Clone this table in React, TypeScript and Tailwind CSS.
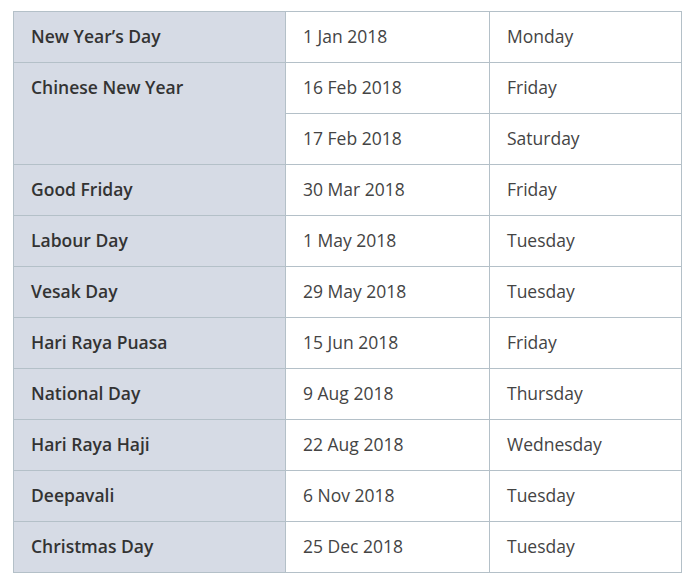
import React from 'react';

interface Holiday {
  name: string;
  dates: { date: string; day: string }[];
}

const HOLIDAYS: Holiday[] = [
  { name: 'New Year’s Day', dates: [{ date: '1 Jan 2018', day: 'Monday' }] },
  {
    name: 'Chinese New Year',
    dates: [
      { date: '16 Feb 2018', day: 'Friday' },
      { date: '17 Feb 2018', day: 'Saturday' },
    ],
  },
  { name: 'Good Friday', dates: [{ date: '30 Mar 2018', day: 'Friday' }] },
  { name: 'Labour Day', dates: [{ date: '1 May 2018', day: 'Tuesday' }] },
  { name: 'Vesak Day', dates: [{ date: '29 May 2018', day: 'Tuesday' }] },
  { name: 'Hari Raya Puasa', dates: [{ date: '15 Jun 2018', day: 'Friday' }] },
  { name: 'National Day', dates: [{ date: '9 Aug 2018', day: 'Thursday' }] },
  { name: 'Hari Raya Haji', dates: [{ date: '22 Aug 2018', day: 'Wednesday' }] },
  { name: 'Deepavali', dates: [{ date: '6 Nov 2018', day: 'Tuesday' }] },
  { name: 'Christmas Day', dates: [{ date: '25 Dec 2018', day: 'Tuesday' }] },
];

const cell = 'h-[51px] border-r border-b border-[#b4c0c8] pl-[17px] pt-[11px] leading-[27px]';

export default function App() {
  return (
    <div className="min-h-[582px] w-[694px] bg-white pt-[11px] pl-[13px] font-['Open_Sans',sans-serif] text-[17.5px]">
      <div className="grid w-[669px] grid-cols-[272px_204px_192px] border-l border-t border-[#b4c0c8]">
        {HOLIDAYS.map(h => (
          <React.Fragment key={h.name}>
            <div
              className={`${cell} bg-[#d6dbe5] font-semibold text-[#333333] ${h.dates.length > 1 ? 'row-span-2 h-auto' : ''}`}
            >
              {h.name}
            </div>
            {h.dates.map(d => (
              <React.Fragment key={d.date}>
                <div className={`${cell} text-[#444444]`}>{d.date}</div>
                <div className={`${cell} text-[#444444]`}>{d.day}</div>
              </React.Fragment>
            ))}
          </React.Fragment>
        ))}
      </div>
    </div>
  );
}
